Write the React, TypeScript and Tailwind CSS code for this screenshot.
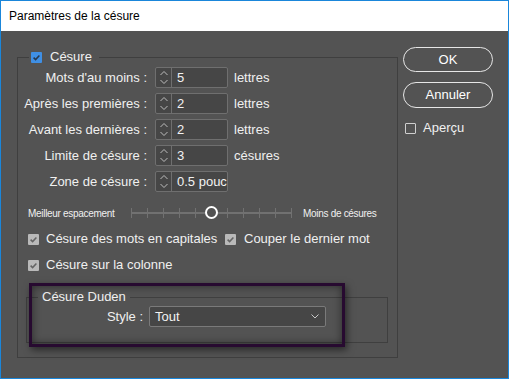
import { FC } from "react";

const font = { fontFamily: '"Liberation Sans", Arial, sans-serif' };

const Check: FC<{ tone?: "blue" | "gray" | "empty" }> = ({ tone = "gray" }) => {
  if (tone === "empty") {
    return <span className="block w-[11px] h-[11px] shrink-0 border border-[#cfcfcf] rounded-[1px]" />;
  }
  return (
    <span
      className={
        "flex w-[11px] h-[11px] shrink-0 rounded-[1px] items-center justify-center " +
        (tone === "blue" ? "bg-[#3f8fe4]" : "bg-[#b9b9b9]")
      }
    >
      <svg width="11" height="11" viewBox="0 0 11 11">
        <path
          d="M2.6 5.6 L4.6 7.6 L8.4 3.4"
          fill="none"
          stroke={tone === "blue" ? "#26384d" : "#646464"}
          strokeWidth="1.5"
        />
      </svg>
    </span>
  );
};

const Spinner: FC<{ value: string }> = ({ value }) => (
  <div className="flex w-[73px] h-[21px] border border-[#6f6f6f] rounded-[2px] bg-[#464646] overflow-hidden">
    <div className="w-[16px] border-r border-[#6f6f6f] shrink-0">
      <svg width="16" height="19" viewBox="0 0 16 19">
        <path d="M4.5 7 L8 3.5 L11.5 7" fill="none" stroke="#bdbdbd" strokeWidth="1" />
        <path d="M4.5 12 L8 15.5 L11.5 12" fill="none" stroke="#bdbdbd" strokeWidth="1" />
      </svg>
    </div>
    <div className="pl-[5px] leading-[19px] text-[13px] whitespace-nowrap text-[#f2f2f2]">
      {value}
    </div>
  </div>
);

// the reference shows the last value cut off by its field
const rows = [
  { label: "Mots d'au moins :", value: "5", unit: "lettres" },
  { label: "Après les premières :", value: "2", unit: "lettres" },
  { label: "Avant les dernières :", value: "2", unit: "lettres" },
  { label: "Limite de césure :", value: "3", unit: "césures" },
  { label: "Zone de césure :", value: "0.5 pouc", unit: "" },
];

const ticks = [0, 16, 32, 48, 64, 96, 112, 128, 144, 160];

export default function App() {
  return (
    <div
      className="w-[509px] h-[379px] flex flex-col border border-[#1a86da] text-[#f0f0f0] overflow-hidden"
      style={font}
    >
      <div className="h-[30px] shrink-0 bg-white text-black text-[12px] leading-[30px] pl-[8px]">
        Paramètres de la césure
      </div>
      <div className="relative flex-1 bg-[#535353] flex">
        <fieldset className="ml-[16px] mt-[18px] w-[381px] h-[309px] border border-[#3f3f3f] text-[13px]">
          <legend className="ml-[11px] pl-[2px] pr-[7px] h-[16px] flex items-center gap-[8px]">
            <Check tone="blue" />
            <span className="leading-[16px]">Césure</span>
          </legend>
          <div className="pt-[2px] flex flex-col gap-[5px]">
            {rows.map((r) => (
              <div key={r.label} className="flex items-center h-[21px]">
                <span className="w-[129px] text-right whitespace-nowrap">{r.label}</span>
                <div className="ml-[8px]">
                  <Spinner value={r.value} />
                </div>
                <span className="ml-[6px]">{r.unit}</span>
              </div>
            ))}
          </div>
          <div className="mt-[13px] h-[16px] flex items-center pl-[10px] text-[10px] tracking-[-0.3px]">
            <span className="w-[103px] whitespace-nowrap">Meilleur espacement</span>
            <div className="relative w-[161px] h-[16px]">
              <div className="absolute left-0 right-0 top-[7px] h-[2px] bg-[#717171]" />
              {ticks.map((t) => (
                <div
                  key={t}
                  className="absolute top-[3px] w-[1px] h-[10px] bg-[#717171]"
                  style={{ left: t }}
                />
              ))}
              <div className="absolute left-[74px] top-[1px] w-[13px] h-[13px] rounded-full border-[2px] border-white bg-[#535353]" />
            </div>
            <span className="ml-[11px] whitespace-nowrap">Moins de césures</span>
          </div>
          <div className="mt-[10px] h-[16px] flex items-center pl-[10px]">
            <div className="w-[197px] flex items-center gap-[7px]">
              <Check />
              <span>Césure des mots en capitales</span>
            </div>
            <div className="flex items-center gap-[8px]">
              <Check />
              <span>Couper le dernier mot</span>
            </div>
          </div>
          <div className="mt-[10px] h-[16px] flex items-center pl-[10px] gap-[7px]">
            <Check />
            <span>Césure sur la colonne</span>
          </div>
          <fieldset className="ml-[8px] mt-[16px] w-[362px] h-[54px] border border-[#3f3f3f]">
            <legend className="ml-[11px] px-[4px] h-[16px] leading-[16px]">Césure Duden</legend>
            <div className="pt-[1px] flex items-center h-[22px]">
              <span className="w-[116px] text-right">Style :</span>
              <div className="ml-[6px] w-[177px] h-[21px] border border-[#7a7a7a] rounded-[2px] bg-[#464646] flex items-center pl-[5px] pr-[6px]">
                <span className="flex-1 text-[#f2f2f2]">Tout</span>
                <svg width="8" height="5" viewBox="0 0 8 5">
                  <path d="M0.5 0.5 L4 4 L7.5 0.5" fill="none" stroke="#c8c8c8" strokeWidth="1" />
                </svg>
              </div>
            </div>
          </fieldset>
        </fieldset>

        <div className="ml-[5px] mt-[16px] w-[90px] flex flex-col text-[13px]">
          <button className="h-[25px] rounded-full border-[1.5px] border-[#e6e6e6] text-white">OK</button>
          <button className="mt-[10px] h-[26px] rounded-full border-[1.5px] border-[#e6e6e6] text-white">
            Annuler
          </button>
          <div className="mt-[12px] h-[16px] flex items-center gap-[7px] pl-[2px]">
            <Check tone="empty" />
            <span>Aperçu</span>
          </div>
        </div>

        <div className="absolute left-[28px] top-[252px] w-[316px] h-[64px] border-[3px] border-[#270a30] shadow-[2px_3px_7px_rgba(0,0,0,0.5),inset_0_0_8px_rgba(0,0,0,0.5)] pointer-events-none" />
      </div>
    </div>
  );
}
